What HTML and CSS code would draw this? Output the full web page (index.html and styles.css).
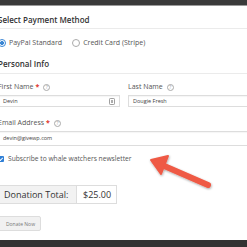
FILE: index.html
```html
<!DOCTYPE html>
<html lang="en">
<head>
  <meta charset="UTF-8" />
  <title>Donation Form</title>
  <link rel="stylesheet" href="styles.css">
</head>
<body>
  <div class="topbar"></div>
  <div class="form">
    <div class="section-title">Select Payment Method</div>
    <div class="gateways">
      <label class="gateway"><span class="radio checked"></span>PayPal Standard</label>
      <label class="gateway"><span class="radio"></span>Credit Card (Stripe)</label>
    </div>

    <div class="section-title personal">Personal Info</div>
    <div class="row">
      <div class="field">
        <div class="label">First Name <span class="req">*</span> <span class="help">?</span></div>
        <div class="input">Devin
          <svg class="card-icon" width="6" height="7" viewBox="0 0 6 7">
            <rect x="0.5" y="0.5" width="5" height="6" rx="0.8" fill="#fff" stroke="#888" stroke-width="0.8"/>
            <rect x="2.2" y="2" width="1.6" height="3" fill="#999"/>
          </svg>
        </div>
      </div>
      <div class="field last">
        <div class="label">Last Name <span class="help">?</span></div>
        <div class="input">Dougie Fresh</div>
      </div>
    </div>
    <div class="field email">
      <div class="label">Email Address <span class="req">*</span> <span class="help">?</span></div>
      <div class="input tall">devin@givewp.com</div>
    </div>

    <label class="subscribe"><span class="checkbox"></span>Subscribe to whale watchers newsletter</label>

    <div class="total">
      <span class="total-label">Donation Total:</span>
      <span class="total-amount">$25.00</span>
    </div>

    <button class="btn">Donate Now</button>
  </div>
  <div class="bottombar"></div>

  <svg class="arrow" width="247" height="247" viewBox="0 0 247 247">
    <defs>
      <filter id="shadow" x="-20%" y="-20%" width="140%" height="140%">
        <feDropShadow dx="0.5" dy="1" stdDeviation="1" flood-color="#000" flood-opacity="0.35"/>
      </filter>
    </defs>
    <g filter="url(#shadow)" fill="#ef5a45" stroke="#ef5a45">
      <line x1="208" y1="185" x2="162" y2="165" stroke-width="6" stroke-linecap="round"/>
      <polygon points="151,160 168,156 161,174" stroke-width="2" stroke-linejoin="round"/>
    </g>
  </svg>
</body>
</html>
```

FILE: styles.css
```css
body {
  margin: 0;
  width: 247px;
  height: 247px;
  overflow: hidden;
  position: relative;
  background: #fff;
  font-family: 'Open Sans', sans-serif;
  color: #555;
}

.topbar {
  height: 5px;
  background: #3a3a3a;
  border-bottom: 1px solid #9a9a9a;
}

.form {
  margin-left: -2px;
  width: 252px;
}

.section-title {
  font-size: 8px;
  line-height: 10px;
  font-weight: 600;
  color: #333;
  margin-top: 9px;
  padding-bottom: 3px;
  border-bottom: 1px solid #ebebeb;
}

.section-title.personal {
  margin-top: 11px;
  padding-bottom: 4px;
}

.gateways {
  display: flex;
  gap: 10px;
  margin-top: 9px;
  font-size: 7px;
  line-height: 10px;
}

.gateway {
  display: flex;
  align-items: center;
  gap: 3px;
}

.radio {
  width: 6px;
  height: 6px;
  border: 1px solid #aaa;
  border-radius: 50%;
  box-sizing: content-box;
}

.radio.checked {
  border-color: #3a86d4;
  background: radial-gradient(circle, #3a86d4 0 1.8px, #fff 2.2px);
}

.row {
  display: flex;
  gap: 8px;
  margin-top: 8px;
}

.field {
  flex: 1;
}

.field:first-child {
  flex: 0 0 122px;
}

.label {
  font-size: 7px;
  line-height: 10px;
  display: flex;
  align-items: center;
  gap: 2px;
}

.req {
  color: #e0342b;
  font-weight: 700;
}

.help {
  width: 5px;
  height: 5px;
  border: 0.8px solid #aaa;
  border-radius: 50%;
  font-size: 4.5px;
  line-height: 5px;
  text-align: center;
  color: #999;
  margin-left: 2px;
}

.input {
  position: relative;
  margin-top: 3px;
  height: 12px;
  border: 1px solid #ddd;
  box-sizing: border-box;
  font-size: 5.5px;
  line-height: 10px;
  padding-left: 4px;
  color: #444;
  box-shadow: inset 0 1px 1px rgba(0, 0, 0, 0.04);
}

.input.tall {
  height: 15px;
  line-height: 13px;
}

.card-icon {
  position: absolute;
  right: 4px;
  top: 2px;
}

.field.email {
  margin-top: 11px;
}

.subscribe {
  display: flex;
  align-items: center;
  gap: 4px;
  margin-top: 8px;
  font-size: 6.7px;
  line-height: 10px;
}

.checkbox {
  width: 6px;
  height: 6px;
  border-radius: 1px;
  background: #2f7fd6;
  position: relative;
}

.checkbox::after {
  content: '';
  position: absolute;
  left: 1.7px;
  top: 0.6px;
  width: 1.4px;
  height: 3px;
  border: solid #fff;
  border-width: 0 1px 1px 0;
  transform: rotate(45deg);
}

.total {
  display: flex;
  width: 119px;
  height: 19px;
  margin-top: 21px;
  border: 1px solid #ddd;
  box-sizing: border-box;
  font-size: 9px;
  line-height: 17px;
  color: #333;
}

.total-label {
  width: 78px;
  padding-left: 5px;
  background: #f2f2f2;
  border-right: 1px solid #ddd;
  box-sizing: border-box;
}

.total-amount {
  padding-left: 6px;
}

.btn {
  display: block;
  margin-top: 12px;
  width: 43px;
  height: 15px;
  padding: 0 0 0 2px;
  border: 1px solid #ddd;
  border-radius: 2px;
  background: #f1f1f1;
  font-family: 'Open Sans', sans-serif;
  font-size: 5px;
  color: #777;
}

.bottombar {
  position: absolute;
  left: 0;
  bottom: 0;
  width: 247px;
  height: 7px;
  background: #333;
}

.arrow {
  position: absolute;
  left: 0;
  top: 0;
}
```
